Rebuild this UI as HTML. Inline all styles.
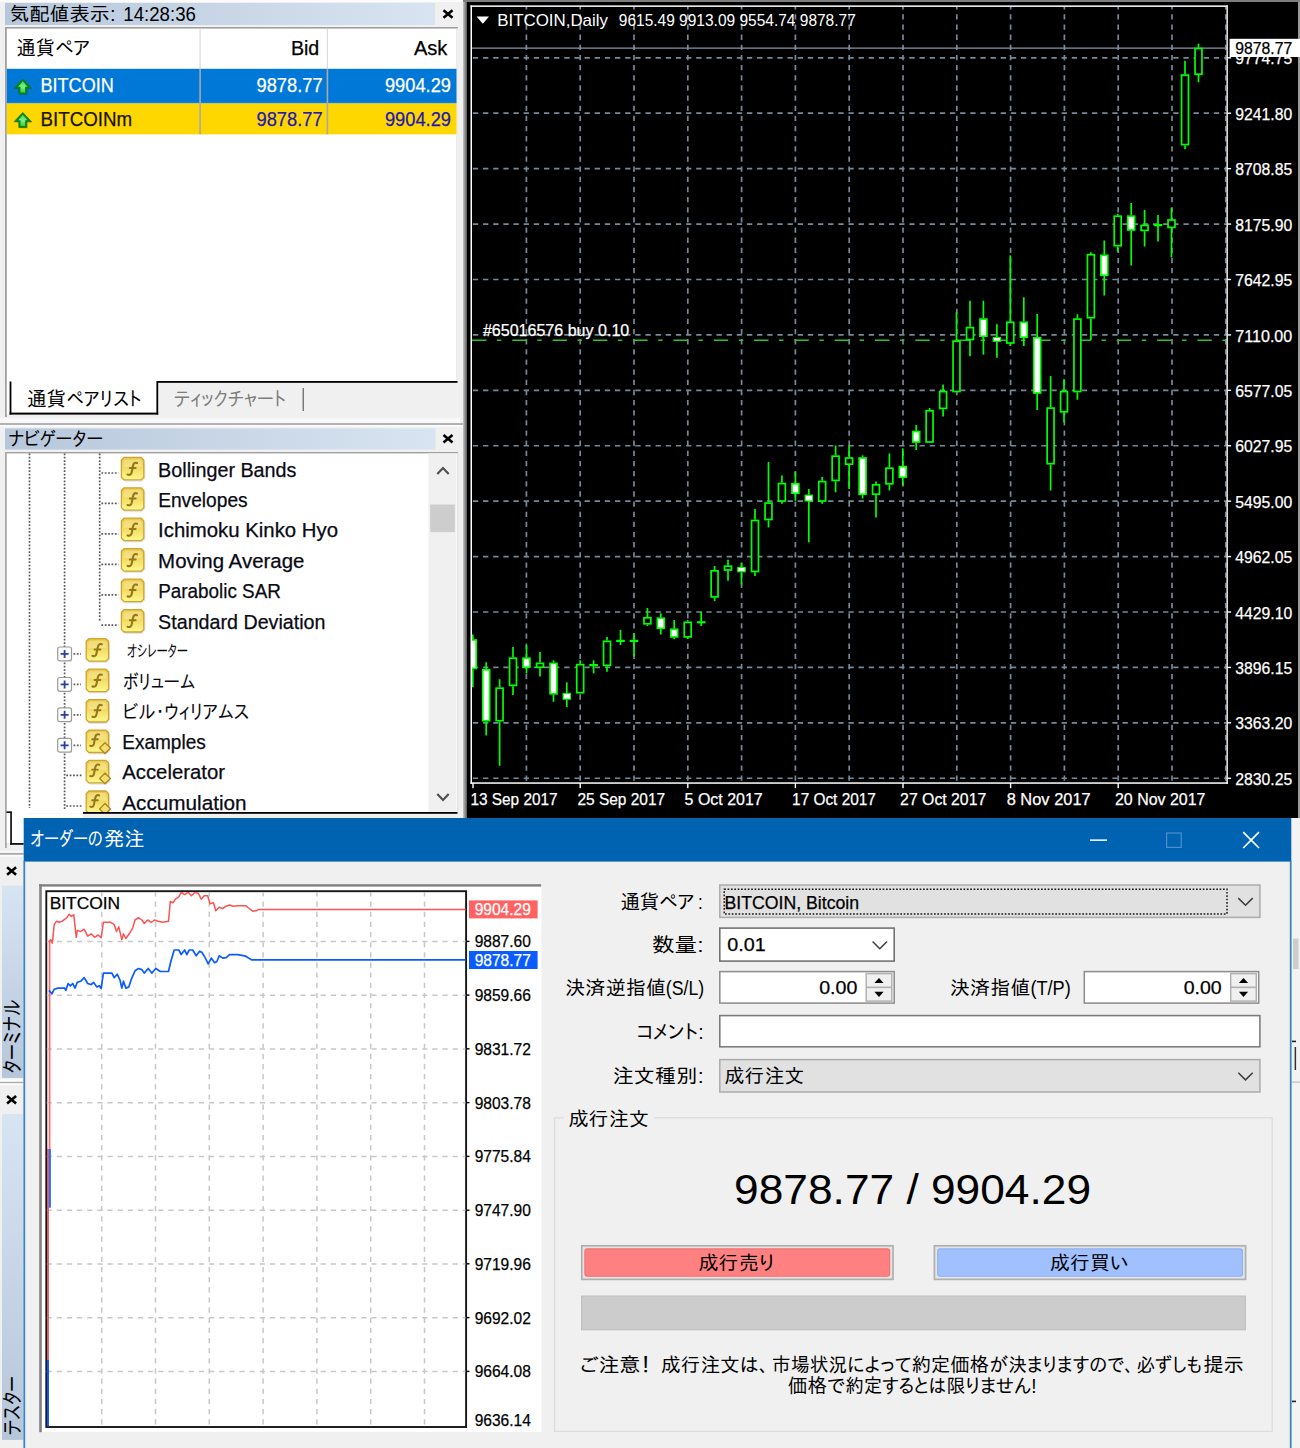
<!DOCTYPE html>
<html lang="ja"><head><meta charset="utf-8"><title>MetaTrader 4 - オーダーの発注</title>
<style>
html,body{margin:0;padding:0;background:#f0f0f0;}
body{width:1300px;height:1448px;overflow:hidden;font-family:"Liberation Sans","IPAPGothic","IPAGothic","Noto Sans CJK JP",sans-serif;}
svg{display:block}
svg text{font-family:"Liberation Sans","IPAPGothic","IPAGothic","Noto Sans CJK JP",sans-serif;white-space:pre}
</style></head><body>
<svg width="1300" height="1448" viewBox="0 0 1300 1448">
<defs>
<linearGradient id="gTitle" x1="0" x2="1" y1="0" y2="0"><stop offset="0" stop-color="#b7c7db"/><stop offset="1" stop-color="#d8e4f1"/></linearGradient>
<linearGradient id="gStrip" x1="0" x2="0" y1="0" y2="1"><stop offset="0" stop-color="#d7e4f2"/><stop offset="1" stop-color="#b6c6da"/></linearGradient>
<linearGradient id="gDiv" x1="0" x2="1" y1="0" y2="0"><stop offset="0" stop-color="#c8c8c8"/><stop offset="1" stop-color="#5a5a5a"/></linearGradient>
<linearGradient id="gIcon" x1="0" x2="0" y1="0" y2="1"><stop offset="0" stop-color="#e9c84e"/><stop offset="0.45" stop-color="#f2da62"/><stop offset="1" stop-color="#fdf98e"/></linearGradient>
<linearGradient id="gArrow" x1="0" x2="0" y1="0" y2="1"><stop offset="0" stop-color="#3fdc4f"/><stop offset="0.5" stop-color="#7af08a"/><stop offset="1" stop-color="#2fd040"/></linearGradient>
<g id="icoF">
 <path d="M4.2 1.6 H21 L24.6 5.2 V21.6 L21 25 H4.2 L1 21.6 V5.2 Z" fill="#8090a8" opacity="0.22"/>
 <path d="M3.2 0.6 H20.4 L23 3.2 V20.4 L20.4 23 H3.2 L0.6 20.4 V3.2 Z" fill="url(#gIcon)" stroke="#cfa42c" stroke-width="1.3" stroke-linejoin="round"/>
 <path d="M4.4 2.6 H19.2 L21 4.6 V10 H2.6 V4.6 Z" fill="#fff6c0" opacity="0.35"/>
 <path d="M16.2 6.2 C13.6 5.2 12.6 7 12.1 9.4 L10.9 15.4 C10.5 17.4 9.4 18.6 6.8 17.8" fill="none" stroke="#94781c" stroke-width="2.1" stroke-linecap="round"/>
 <path d="M9 11.3 H14.8" fill="none" stroke="#94781c" stroke-width="2" stroke-linecap="round"/>
</g>
<g id="icoFd">
 <path d="M4.2 1.6 H21 L24.6 5.2 V21.6 L21 25 H4.2 L1 21.6 V5.2 Z" fill="#8090a8" opacity="0.22"/>
 <path d="M3.2 0.6 H20.4 L23 3.2 V20.4 L20.4 23 H3.2 L0.6 20.4 V3.2 Z" fill="url(#gIcon)" stroke="#cfa42c" stroke-width="1.3" stroke-linejoin="round"/>
 <path d="M4.4 2.6 H19.2 L21 4.6 V10 H2.6 V4.6 Z" fill="#fff6c0" opacity="0.35"/>
 <path d="M13.6 5 C11 4 10 5.8 9.5 8.2 L8.4 14 C8 16 6.9 17 4.6 16.2" fill="none" stroke="#94781c" stroke-width="2" stroke-linecap="round"/>
 <path d="M6.6 9.8 H12.2" fill="none" stroke="#94781c" stroke-width="1.9" stroke-linecap="round"/>
 <path d="M19.4 13.2 L24.8 18.6 L19.4 24 L14 18.6 Z" fill="#f6df72" stroke="#b08a1a" stroke-width="1.4" stroke-linejoin="round"/>
</g>
<g id="icoPlus">
 <rect x="0.6" y="0.6" width="13.8" height="13.8" rx="2" ry="2" fill="#fdfdfd" stroke="#9a9a9a" stroke-width="1.2"/>
 <path d="M3.5 7.5 H11.5 M7.5 3.5 V11.5" stroke="#2a3f9e" stroke-width="1.8" fill="none"/>
</g>
<g id="icoUp">
 <path d="M10 1.4 L19 10.6 H14 V16.4 H6 V10.6 H1 Z" fill="#203040" opacity="0.18"/>
 <path d="M9 0.3 L17.8 9.5 H13 V15.3 H5 V9.5 H0.2 Z" fill="#0e8414" stroke="#0b6e10" stroke-width="0.6" stroke-linejoin="round"/>
 <path d="M9 2.6 L13.6 8 H11.3 V13.8 H6.7 V8 H4.4 Z" fill="url(#gArrow)"/>
</g>
<g id="icoX"><path d="M0 0 L9 7.5 M9 0 L0 7.5" stroke="#000" stroke-width="2.6" fill="none"/></g>
</defs>
<rect x="0.00" y="0.00" width="1300.00" height="1448.00" fill="#f0f0f0" />
<rect x="0.00" y="0.00" width="463.00" height="2.00" fill="#fbfbfb" />
<rect x="5.00" y="3.00" width="430.00" height="22.00" fill="url(#gTitle)" />
<text y="21.05" font-size="19.6" fill="#000" ><tspan x="9.41" textLength="106.18" lengthAdjust="spacingAndGlyphs">気配値表示:</tspan><tspan> </tspan><tspan x="123.31" textLength="72.58" lengthAdjust="spacingAndGlyphs">14:28:36</tspan></text>
<use href="#icoX" x="443.5" y="10.3"/>
<rect x="6.00" y="27.00" width="452.00" height="355.00" fill="#ffffff" />
<rect x="6.00" y="27.00" width="452.00" height="1.60" fill="#a0a0a0" />
<rect x="5.00" y="27.00" width="1.80" height="390.00" fill="#a0a0a0" />
<rect x="456.00" y="28.60" width="2.00" height="353.00" fill="#ececec" />
<rect x="199.50" y="29.00" width="1.20" height="39.50" fill="#dcdcdc" />
<rect x="326.80" y="29.00" width="1.20" height="39.50" fill="#dcdcdc" />
<text y="55.40" font-size="20" fill="#000" ><tspan x="16.60" textLength="38.20" lengthAdjust="spacingAndGlyphs">通貨</tspan><tspan x="55.40" textLength="34.70" lengthAdjust="spacingAndGlyphs">ペア</tspan></text>
<text x="290.92" y="54.62" font-size="19.6" fill="#000" stroke="#000" stroke-width="0.25" textLength="28.36" lengthAdjust="spacingAndGlyphs" >Bid</text>
<text x="413.92" y="54.62" font-size="19.6" fill="#000" stroke="#000" stroke-width="0.25" textLength="33.46" lengthAdjust="spacingAndGlyphs" >Ask</text>
<rect x="6.80" y="68.80" width="449.70" height="34.20" fill="#0078d7" />
<rect x="6.80" y="103.40" width="449.70" height="30.90" fill="#ffd700" />
<rect x="6.80" y="102.80" width="449.70" height="0.80" fill="#8fb090" />
<rect x="6.80" y="134.20" width="449.70" height="0.90" fill="#f5ecb8" />
<rect x="199.30" y="68.80" width="1.60" height="34.20" fill="#a9a9a9" />
<rect x="326.60" y="68.80" width="1.60" height="34.20" fill="#a9a9a9" />
<rect x="199.30" y="103.40" width="1.60" height="30.90" fill="#a9a9a9" />
<rect x="326.60" y="103.40" width="1.60" height="30.90" fill="#a9a9a9" />
<use href="#icoUp" x="13.8" y="78.7"/>
<use href="#icoUp" x="13.8" y="112.2"/>
<text x="40.53" y="92.18" font-size="19.5" fill="#ffffff" stroke="#ffffff" stroke-width="0.25" textLength="73.25" lengthAdjust="spacingAndGlyphs" >BITCOIN</text>
<text x="256.53" y="92.38" font-size="19.5" fill="#ffffff" stroke="#ffffff" stroke-width="0.25" textLength="66.05" lengthAdjust="spacingAndGlyphs" >9878.77</text>
<text x="384.93" y="92.38" font-size="19.5" fill="#ffffff" stroke="#ffffff" stroke-width="0.25" textLength="66.05" lengthAdjust="spacingAndGlyphs" >9904.29</text>
<text x="40.53" y="125.68" font-size="19.5" fill="#1a1200" stroke="#1a1200" stroke-width="0.25" textLength="91.65" lengthAdjust="spacingAndGlyphs" >BITCOINm</text>
<text x="256.53" y="125.88" font-size="19.5" fill="#2418b4" stroke="#2418b4" stroke-width="0.25" textLength="66.05" lengthAdjust="spacingAndGlyphs" >9878.77</text>
<text x="384.93" y="125.88" font-size="19.5" fill="#2418b4" stroke="#2418b4" stroke-width="0.25" textLength="66.05" lengthAdjust="spacingAndGlyphs" >9904.29</text>
<rect x="6.90" y="382.00" width="150.00" height="32.00" fill="#ffffff" />
<rect x="157.00" y="381.00" width="300.50" height="1.80" fill="#000000" />
<rect x="9.60" y="381.50" width="1.80" height="33.00" fill="#000000" />
<rect x="9.60" y="412.60" width="148.60" height="2.00" fill="#000000" />
<rect x="156.40" y="381.00" width="1.80" height="33.60" fill="#000000" />
<text y="406.00" font-size="20" fill="#000" ><tspan x="27.10" textLength="39.00" lengthAdjust="spacingAndGlyphs">通貨</tspan><tspan x="66.80" textLength="75.00" lengthAdjust="spacingAndGlyphs">ペアリスト</tspan></text>
<text x="173.90" y="406.00" font-size="20" fill="#7d7d7d"  textLength="112.30" lengthAdjust="spacingAndGlyphs" >ティックチャート</text>
<rect x="302.60" y="388.00" width="1.30" height="23.00" fill="#6a6a6a" />
<rect x="0.00" y="418.20" width="460.00" height="4.60" fill="#f9f9f9" />
<rect x="0.00" y="423.00" width="463.50" height="2.00" fill="#b2b2b2" />
<rect x="0.00" y="425.20" width="463.00" height="1.50" fill="#fdfdfd" />
<rect x="5.00" y="428.40" width="430.60" height="21.20" fill="url(#gTitle)" />
<text x="8.60" y="446.40" font-size="20" fill="#000"  textLength="94.50" lengthAdjust="spacingAndGlyphs" >ナビゲーター</text>
<use href="#icoX" x="443.5" y="435"/>
<rect x="6.00" y="452.00" width="452.00" height="361.00" fill="#ffffff" />
<rect x="6.00" y="452.00" width="452.00" height="1.40" fill="#a0a0a0" />
<rect x="5.00" y="452.00" width="1.80" height="396.00" fill="#a8a8a8" />
<rect x="457.00" y="453.00" width="1.50" height="359.00" fill="#e4e4e4" />
<rect x="428.40" y="453.40" width="28.00" height="359.00" fill="#f0f0f0" />
<rect x="430.20" y="504.50" width="24.60" height="27.60" fill="#cdcdcd" />
<path d="M437.3 474 L443 468 L448.7 474" fill="none" stroke="#505050" stroke-width="2.2"/>
<path d="M437.3 794 L443 800 L448.7 794" fill="none" stroke="#505050" stroke-width="2.2"/>
<line x1="29.50" y1="453.50" x2="29.50" y2="808.00" stroke="#5a5a5a" stroke-width="1.7" stroke-dasharray="1.75 1.62"/>
<line x1="64.60" y1="453.50" x2="64.60" y2="809.00" stroke="#5a5a5a" stroke-width="1.7" stroke-dasharray="1.75 1.62"/>
<line x1="99.70" y1="453.50" x2="99.70" y2="621.50" stroke="#5a5a5a" stroke-width="1.7" stroke-dasharray="1.75 1.62"/>
<line x1="101.40" y1="473.00" x2="118.50" y2="473.00" stroke="#5a5a5a" stroke-width="1.7" stroke-dasharray="1.75 1.62"/>
<use href="#icoF" x="120.8" y="456.8"/>
<text x="158.14" y="476.61" font-size="19.3" fill="#0a0a14" stroke="#0a0a14" stroke-width="0.25" textLength="138.33" lengthAdjust="spacingAndGlyphs" >Bollinger Bands</text>
<line x1="101.40" y1="503.40" x2="118.50" y2="503.40" stroke="#5a5a5a" stroke-width="1.7" stroke-dasharray="1.75 1.62"/>
<use href="#icoF" x="120.8" y="487.2"/>
<text x="158.14" y="507.01" font-size="19.3" fill="#0a0a14" stroke="#0a0a14" stroke-width="0.25" textLength="89.53" lengthAdjust="spacingAndGlyphs" >Envelopes</text>
<line x1="101.40" y1="533.80" x2="118.50" y2="533.80" stroke="#5a5a5a" stroke-width="1.7" stroke-dasharray="1.75 1.62"/>
<use href="#icoF" x="120.8" y="517.6"/>
<text x="158.14" y="537.41" font-size="19.3" fill="#0a0a14" stroke="#0a0a14" stroke-width="0.25" textLength="179.93" lengthAdjust="spacingAndGlyphs" >Ichimoku Kinko Hyo</text>
<line x1="101.40" y1="564.30" x2="118.50" y2="564.30" stroke="#5a5a5a" stroke-width="1.7" stroke-dasharray="1.75 1.62"/>
<use href="#icoF" x="120.8" y="548.1"/>
<text x="158.14" y="567.91" font-size="19.3" fill="#0a0a14" stroke="#0a0a14" stroke-width="0.25" textLength="146.33" lengthAdjust="spacingAndGlyphs" >Moving Average</text>
<line x1="101.40" y1="594.80" x2="118.50" y2="594.80" stroke="#5a5a5a" stroke-width="1.7" stroke-dasharray="1.75 1.62"/>
<use href="#icoF" x="120.8" y="578.6"/>
<text x="158.14" y="598.41" font-size="19.3" fill="#0a0a14" stroke="#0a0a14" stroke-width="0.25" textLength="122.83" lengthAdjust="spacingAndGlyphs" >Parabolic SAR</text>
<line x1="101.40" y1="625.20" x2="118.50" y2="625.20" stroke="#5a5a5a" stroke-width="1.7" stroke-dasharray="1.75 1.62"/>
<use href="#icoF" x="120.8" y="609.0"/>
<text x="158.14" y="628.81" font-size="19.3" fill="#0a0a14" stroke="#0a0a14" stroke-width="0.25" textLength="167.33" lengthAdjust="spacingAndGlyphs" >Standard Deviation</text>
<clipPath id="cNav"><rect x="6" y="453" width="422" height="359.5"/></clipPath><g clip-path="url(#cNav)">
<use href="#icoPlus" x="57.1" y="646.4"/>
<line x1="73.50" y1="653.90" x2="81.00" y2="653.90" stroke="#5a5a5a" stroke-width="1.7" stroke-dasharray="1.75 1.62"/>
<use href="#icoF" x="85.6" y="638.1"/>
<text x="126.89" y="656.99" font-size="17" fill="#0a0a14"  textLength="61.02" lengthAdjust="spacingAndGlyphs" >オシレーター</text>
<use href="#icoPlus" x="57.1" y="676.9"/>
<line x1="73.50" y1="684.40" x2="81.00" y2="684.40" stroke="#5a5a5a" stroke-width="1.7" stroke-dasharray="1.75 1.62"/>
<use href="#icoF" x="85.6" y="668.6"/>
<text x="122.70" y="688.60" font-size="20" fill="#0a0a14"  textLength="72.40" lengthAdjust="spacingAndGlyphs" >ボリューム</text>
<use href="#icoPlus" x="57.1" y="707.3"/>
<line x1="73.50" y1="714.80" x2="81.00" y2="714.80" stroke="#5a5a5a" stroke-width="1.7" stroke-dasharray="1.75 1.62"/>
<use href="#icoF" x="85.6" y="699.0"/>
<text x="122.70" y="719.00" font-size="20" fill="#0a0a14"  textLength="126.60" lengthAdjust="spacingAndGlyphs" >ビル・ウィリアムス</text>
<use href="#icoPlus" x="57.1" y="737.8"/>
<line x1="73.50" y1="745.30" x2="81.00" y2="745.30" stroke="#5a5a5a" stroke-width="1.7" stroke-dasharray="1.75 1.62"/>
<use href="#icoFd" x="85.6" y="729.5"/>
<text x="122.24" y="749.01" font-size="19.3" fill="#0a0a14" stroke="#0a0a14" stroke-width="0.25" textLength="83.53" lengthAdjust="spacingAndGlyphs" >Examples</text>
<line x1="66.30" y1="775.40" x2="83.00" y2="775.40" stroke="#5a5a5a" stroke-width="1.7" stroke-dasharray="1.75 1.62"/>
<use href="#icoFd" x="85.6" y="759.8"/>
<text x="122.24" y="779.31" font-size="19.3" fill="#0a0a14" stroke="#0a0a14" stroke-width="0.25" textLength="102.73" lengthAdjust="spacingAndGlyphs" >Accelerator</text>
<line x1="66.30" y1="806.00" x2="83.00" y2="806.00" stroke="#5a5a5a" stroke-width="1.7" stroke-dasharray="1.75 1.62"/>
<use href="#icoFd" x="85.6" y="790.4"/>
<text x="122.24" y="809.91" font-size="19.3" fill="#0a0a14" stroke="#0a0a14" stroke-width="0.25" textLength="124.33" lengthAdjust="spacingAndGlyphs" >Accumulation</text>
</g>
<rect x="6.80" y="813.00" width="20.00" height="30.00" fill="#ffffff" />
<rect x="11.00" y="813.50" width="72.00" height="5.00" fill="#ffffff" />
<rect x="83.00" y="812.00" width="374.50" height="1.80" fill="#000000" />
<rect x="10.20" y="812.00" width="1.70" height="32.80" fill="#111111" />
<rect x="6.50" y="811.30" width="5.40" height="1.70" fill="#111111" />
<rect x="10.20" y="843.00" width="14.00" height="1.80" fill="#111111" />
<rect x="0.00" y="851.20" width="24.00" height="1.50" fill="#fdfdfd" />
<rect x="0.00" y="852.90" width="24.00" height="1.90" fill="#adadad" />
<rect x="0.00" y="855.00" width="24.00" height="1.60" fill="#fdfdfd" />
<use href="#icoX" x="7.1" y="867.3"/>
<rect x="2.00" y="885.50" width="21.40" height="192.40" fill="url(#gStrip)" />
<text transform="translate(20.4,1073.5) rotate(-90)" font-size="22" textLength="74" lengthAdjust="spacingAndGlyphs" fill="#000">ターミナル</text>
<rect x="0.00" y="1079.30" width="24.00" height="2.30" fill="#fdfdfd" />
<rect x="0.00" y="1081.80" width="24.00" height="1.50" fill="#adadad" />
<rect x="0.00" y="1083.50" width="24.00" height="1.60" fill="#fdfdfd" />
<use href="#icoX" x="7.1" y="1095.9"/>
<rect x="2.00" y="1113.90" width="21.40" height="326.00" fill="url(#gStrip)" />
<text transform="translate(20.4,1435) rotate(-90)" font-size="22" textLength="59" lengthAdjust="spacingAndGlyphs" fill="#000">テスター</text>
<rect x="463.00" y="0.00" width="4.00" height="818.00" fill="url(#gDiv)" />
<rect x="467.00" y="0.00" width="833.00" height="818.00" fill="#000000" />
<rect x="463.00" y="0.00" width="837.00" height="2.00" fill="#7e7e7e" />
<rect x="1298.00" y="2.00" width="2.00" height="816.00" fill="#9a9a9a" />
<clipPath id="cChart"><rect x="471.8" y="6.8" width="755" height="776"/></clipPath>
<g clip-path="url(#cChart)">
<line x1="526.40" y1="4.15" x2="526.40" y2="783.00" stroke="#778899" stroke-width="1.7" stroke-dasharray="5.3 4.85"/>
<line x1="580.20" y1="4.15" x2="580.20" y2="783.00" stroke="#778899" stroke-width="1.7" stroke-dasharray="5.3 4.85"/>
<line x1="634.00" y1="4.15" x2="634.00" y2="783.00" stroke="#778899" stroke-width="1.7" stroke-dasharray="5.3 4.85"/>
<line x1="687.80" y1="4.15" x2="687.80" y2="783.00" stroke="#778899" stroke-width="1.7" stroke-dasharray="5.3 4.85"/>
<line x1="741.60" y1="4.15" x2="741.60" y2="783.00" stroke="#778899" stroke-width="1.7" stroke-dasharray="5.3 4.85"/>
<line x1="795.40" y1="4.15" x2="795.40" y2="783.00" stroke="#778899" stroke-width="1.7" stroke-dasharray="5.3 4.85"/>
<line x1="849.20" y1="4.15" x2="849.20" y2="783.00" stroke="#778899" stroke-width="1.7" stroke-dasharray="5.3 4.85"/>
<line x1="903.00" y1="4.15" x2="903.00" y2="783.00" stroke="#778899" stroke-width="1.7" stroke-dasharray="5.3 4.85"/>
<line x1="956.80" y1="4.15" x2="956.80" y2="783.00" stroke="#778899" stroke-width="1.7" stroke-dasharray="5.3 4.85"/>
<line x1="1010.60" y1="4.15" x2="1010.60" y2="783.00" stroke="#778899" stroke-width="1.7" stroke-dasharray="5.3 4.85"/>
<line x1="1064.40" y1="4.15" x2="1064.40" y2="783.00" stroke="#778899" stroke-width="1.7" stroke-dasharray="5.3 4.85"/>
<line x1="1118.20" y1="4.15" x2="1118.20" y2="783.00" stroke="#778899" stroke-width="1.7" stroke-dasharray="5.3 4.85"/>
<line x1="1172.00" y1="4.15" x2="1172.00" y2="783.00" stroke="#778899" stroke-width="1.7" stroke-dasharray="5.3 4.85"/>
<line x1="1225.80" y1="4.15" x2="1225.80" y2="783.00" stroke="#778899" stroke-width="1.7" stroke-dasharray="5.3 4.85"/>
<line x1="472.90" y1="57.80" x2="1227.00" y2="57.80" stroke="#778899" stroke-width="1.7" stroke-dasharray="5.3 4.85"/>
<line x1="472.90" y1="113.22" x2="1227.00" y2="113.22" stroke="#778899" stroke-width="1.7" stroke-dasharray="5.3 4.85"/>
<line x1="472.90" y1="168.64" x2="1227.00" y2="168.64" stroke="#778899" stroke-width="1.7" stroke-dasharray="5.3 4.85"/>
<line x1="472.90" y1="224.06" x2="1227.00" y2="224.06" stroke="#778899" stroke-width="1.7" stroke-dasharray="5.3 4.85"/>
<line x1="472.90" y1="279.48" x2="1227.00" y2="279.48" stroke="#778899" stroke-width="1.7" stroke-dasharray="5.3 4.85"/>
<line x1="472.90" y1="334.90" x2="1227.00" y2="334.90" stroke="#778899" stroke-width="1.7" stroke-dasharray="5.3 4.85"/>
<line x1="472.90" y1="390.32" x2="1227.00" y2="390.32" stroke="#778899" stroke-width="1.7" stroke-dasharray="5.3 4.85"/>
<line x1="472.90" y1="445.74" x2="1227.00" y2="445.74" stroke="#778899" stroke-width="1.7" stroke-dasharray="5.3 4.85"/>
<line x1="472.90" y1="501.16" x2="1227.00" y2="501.16" stroke="#778899" stroke-width="1.7" stroke-dasharray="5.3 4.85"/>
<line x1="472.90" y1="556.58" x2="1227.00" y2="556.58" stroke="#778899" stroke-width="1.7" stroke-dasharray="5.3 4.85"/>
<line x1="472.90" y1="612.00" x2="1227.00" y2="612.00" stroke="#778899" stroke-width="1.7" stroke-dasharray="5.3 4.85"/>
<line x1="472.90" y1="667.42" x2="1227.00" y2="667.42" stroke="#778899" stroke-width="1.7" stroke-dasharray="5.3 4.85"/>
<line x1="472.90" y1="722.84" x2="1227.00" y2="722.84" stroke="#778899" stroke-width="1.7" stroke-dasharray="5.3 4.85"/>
<line x1="472.90" y1="778.26" x2="1227.00" y2="778.26" stroke="#778899" stroke-width="1.7" stroke-dasharray="5.3 4.85"/>
<line x1="472.00" y1="48.10" x2="1227.00" y2="48.10" stroke="#8495a7" stroke-width="1.35" />
<line x1="472.00" y1="340.30" x2="1227.00" y2="340.30" stroke="#2fc22f" stroke-width="1.5" stroke-dasharray="14.4 10.6 4.4 10.9"/>
<line x1="472.80" y1="634.60" x2="472.80" y2="639.20" stroke="#00ff00" stroke-width="1.7" />
<line x1="472.80" y1="669.20" x2="472.80" y2="687.00" stroke="#00ff00" stroke-width="1.7" />
<rect x="469.35" y="640.00" width="6.9" height="28.40" fill="#ffffff" stroke="#00ff00" stroke-width="1.7"/>
<line x1="486.20" y1="662.30" x2="486.20" y2="669.00" stroke="#00ff00" stroke-width="1.7" />
<line x1="486.20" y1="721.50" x2="486.20" y2="735.40" stroke="#00ff00" stroke-width="1.7" />
<rect x="482.75" y="669.80" width="6.9" height="50.90" fill="#ffffff" stroke="#00ff00" stroke-width="1.7"/>
<line x1="499.60" y1="679.20" x2="499.60" y2="687.40" stroke="#00ff00" stroke-width="1.7" />
<line x1="499.60" y1="721.50" x2="499.60" y2="765.80" stroke="#00ff00" stroke-width="1.7" />
<rect x="496.15" y="688.20" width="6.9" height="32.50" fill="#000000" stroke="#00ff00" stroke-width="1.7"/>
<line x1="513.00" y1="647.00" x2="513.00" y2="657.40" stroke="#00ff00" stroke-width="1.7" />
<line x1="513.00" y1="686.20" x2="513.00" y2="695.00" stroke="#00ff00" stroke-width="1.7" />
<rect x="509.55" y="658.20" width="6.9" height="27.20" fill="#000000" stroke="#00ff00" stroke-width="1.7"/>
<line x1="526.50" y1="645.40" x2="526.50" y2="657.40" stroke="#00ff00" stroke-width="1.7" />
<line x1="526.50" y1="668.00" x2="526.50" y2="673.50" stroke="#00ff00" stroke-width="1.7" />
<rect x="523.05" y="658.20" width="6.9" height="9.00" fill="#ffffff" stroke="#00ff00" stroke-width="1.7"/>
<line x1="540.00" y1="652.00" x2="540.00" y2="662.60" stroke="#00ff00" stroke-width="1.7" />
<line x1="540.00" y1="668.00" x2="540.00" y2="676.60" stroke="#00ff00" stroke-width="1.7" />
<rect x="536.55" y="663.40" width="6.9" height="3.80" fill="#000000" stroke="#00ff00" stroke-width="1.7"/>
<line x1="553.50" y1="660.30" x2="553.50" y2="662.60" stroke="#00ff00" stroke-width="1.7" />
<line x1="553.50" y1="694.60" x2="553.50" y2="701.80" stroke="#00ff00" stroke-width="1.7" />
<rect x="550.05" y="663.40" width="6.9" height="30.40" fill="#ffffff" stroke="#00ff00" stroke-width="1.7"/>
<line x1="566.80" y1="682.30" x2="566.80" y2="693.00" stroke="#00ff00" stroke-width="1.7" />
<line x1="566.80" y1="699.70" x2="566.80" y2="707.00" stroke="#00ff00" stroke-width="1.7" />
<rect x="563.10" y="693.55" width="7.4" height="5.60" fill="#ffffff" stroke="#00ff00" stroke-width="1.15"/>
<line x1="580.20" y1="660.30" x2="580.20" y2="663.80" stroke="#00ff00" stroke-width="1.7" />
<line x1="580.20" y1="693.50" x2="580.20" y2="693.50" stroke="#00ff00" stroke-width="1.7" />
<rect x="576.75" y="664.60" width="6.9" height="28.10" fill="#000000" stroke="#00ff00" stroke-width="1.7"/>
<line x1="593.60" y1="660.30" x2="593.60" y2="664.20" stroke="#00ff00" stroke-width="1.7" />
<line x1="593.60" y1="666.00" x2="593.60" y2="673.40" stroke="#00ff00" stroke-width="1.7" />
<rect x="589.30" y="664.00" width="8.60" height="2.20" fill="#00ff00" />
<line x1="607.00" y1="637.00" x2="607.00" y2="640.50" stroke="#00ff00" stroke-width="1.7" />
<line x1="607.00" y1="666.20" x2="607.00" y2="671.80" stroke="#00ff00" stroke-width="1.7" />
<rect x="603.55" y="641.30" width="6.9" height="24.10" fill="#000000" stroke="#00ff00" stroke-width="1.7"/>
<line x1="620.50" y1="630.00" x2="620.50" y2="640.20" stroke="#00ff00" stroke-width="1.7" />
<line x1="620.50" y1="641.60" x2="620.50" y2="645.00" stroke="#00ff00" stroke-width="1.7" />
<rect x="616.20" y="639.80" width="8.60" height="2.20" fill="#00ff00" />
<line x1="634.00" y1="633.00" x2="634.00" y2="640.20" stroke="#00ff00" stroke-width="1.7" />
<line x1="634.00" y1="641.60" x2="634.00" y2="656.50" stroke="#00ff00" stroke-width="1.7" />
<rect x="629.70" y="639.80" width="8.60" height="2.20" fill="#00ff00" />
<line x1="647.40" y1="608.00" x2="647.40" y2="617.00" stroke="#00ff00" stroke-width="1.7" />
<line x1="647.40" y1="624.60" x2="647.40" y2="626.00" stroke="#00ff00" stroke-width="1.7" />
<rect x="643.95" y="617.80" width="6.9" height="6.00" fill="#000000" stroke="#00ff00" stroke-width="1.7"/>
<line x1="660.80" y1="613.30" x2="660.80" y2="617.40" stroke="#00ff00" stroke-width="1.7" />
<line x1="660.80" y1="629.10" x2="660.80" y2="634.60" stroke="#00ff00" stroke-width="1.7" />
<rect x="657.35" y="618.20" width="6.9" height="10.10" fill="#ffffff" stroke="#00ff00" stroke-width="1.7"/>
<line x1="674.20" y1="620.00" x2="674.20" y2="628.50" stroke="#00ff00" stroke-width="1.7" />
<line x1="674.20" y1="637.70" x2="674.20" y2="639.20" stroke="#00ff00" stroke-width="1.7" />
<rect x="670.75" y="629.30" width="6.9" height="7.60" fill="#ffffff" stroke="#00ff00" stroke-width="1.7"/>
<line x1="687.70" y1="620.00" x2="687.70" y2="621.50" stroke="#00ff00" stroke-width="1.7" />
<line x1="687.70" y1="637.70" x2="687.70" y2="639.00" stroke="#00ff00" stroke-width="1.7" />
<rect x="684.25" y="622.30" width="6.9" height="14.60" fill="#000000" stroke="#00ff00" stroke-width="1.7"/>
<line x1="701.20" y1="611.50" x2="701.20" y2="621.60" stroke="#00ff00" stroke-width="1.7" />
<line x1="701.20" y1="623.00" x2="701.20" y2="626.00" stroke="#00ff00" stroke-width="1.7" />
<rect x="696.90" y="621.20" width="8.60" height="2.20" fill="#00ff00" />
<line x1="714.60" y1="566.00" x2="714.60" y2="570.00" stroke="#00ff00" stroke-width="1.7" />
<line x1="714.60" y1="597.70" x2="714.60" y2="601.00" stroke="#00ff00" stroke-width="1.7" />
<rect x="711.15" y="570.80" width="6.9" height="26.10" fill="#000000" stroke="#00ff00" stroke-width="1.7"/>
<line x1="728.00" y1="559.70" x2="728.00" y2="565.40" stroke="#00ff00" stroke-width="1.7" />
<line x1="728.00" y1="570.80" x2="728.00" y2="580.80" stroke="#00ff00" stroke-width="1.7" />
<rect x="724.55" y="566.20" width="6.9" height="3.80" fill="#000000" stroke="#00ff00" stroke-width="1.7"/>
<line x1="741.50" y1="563.00" x2="741.50" y2="567.00" stroke="#00ff00" stroke-width="1.7" />
<line x1="741.50" y1="572.30" x2="741.50" y2="584.30" stroke="#00ff00" stroke-width="1.7" />
<rect x="737.80" y="567.55" width="7.4" height="4.20" fill="#ffffff" stroke="#00ff00" stroke-width="1.15"/>
<line x1="755.00" y1="509.00" x2="755.00" y2="519.70" stroke="#00ff00" stroke-width="1.7" />
<line x1="755.00" y1="572.30" x2="755.00" y2="576.00" stroke="#00ff00" stroke-width="1.7" />
<rect x="751.55" y="520.50" width="6.9" height="51.00" fill="#000000" stroke="#00ff00" stroke-width="1.7"/>
<line x1="768.50" y1="462.00" x2="768.50" y2="502.30" stroke="#00ff00" stroke-width="1.7" />
<line x1="768.50" y1="520.30" x2="768.50" y2="527.40" stroke="#00ff00" stroke-width="1.7" />
<rect x="765.05" y="503.10" width="6.9" height="16.40" fill="#000000" stroke="#00ff00" stroke-width="1.7"/>
<line x1="781.90" y1="475.40" x2="781.90" y2="482.80" stroke="#00ff00" stroke-width="1.7" />
<line x1="781.90" y1="501.80" x2="781.90" y2="503.80" stroke="#00ff00" stroke-width="1.7" />
<rect x="778.45" y="483.60" width="6.9" height="17.40" fill="#000000" stroke="#00ff00" stroke-width="1.7"/>
<line x1="795.40" y1="472.00" x2="795.40" y2="483.00" stroke="#00ff00" stroke-width="1.7" />
<line x1="795.40" y1="494.00" x2="795.40" y2="500.80" stroke="#00ff00" stroke-width="1.7" />
<rect x="791.95" y="483.80" width="6.9" height="9.40" fill="#ffffff" stroke="#00ff00" stroke-width="1.7"/>
<line x1="808.80" y1="489.00" x2="808.80" y2="494.60" stroke="#00ff00" stroke-width="1.7" />
<line x1="808.80" y1="501.50" x2="808.80" y2="542.30" stroke="#00ff00" stroke-width="1.7" />
<rect x="805.10" y="495.15" width="7.4" height="5.80" fill="#ffffff" stroke="#00ff00" stroke-width="1.15"/>
<line x1="822.20" y1="477.00" x2="822.20" y2="480.80" stroke="#00ff00" stroke-width="1.7" />
<line x1="822.20" y1="501.80" x2="822.20" y2="503.80" stroke="#00ff00" stroke-width="1.7" />
<rect x="818.75" y="481.60" width="6.9" height="19.40" fill="#000000" stroke="#00ff00" stroke-width="1.7"/>
<line x1="835.60" y1="445.40" x2="835.60" y2="455.40" stroke="#00ff00" stroke-width="1.7" />
<line x1="835.60" y1="481.20" x2="835.60" y2="492.30" stroke="#00ff00" stroke-width="1.7" />
<rect x="832.15" y="456.20" width="6.9" height="24.20" fill="#000000" stroke="#00ff00" stroke-width="1.7"/>
<line x1="849.10" y1="445.40" x2="849.10" y2="457.20" stroke="#00ff00" stroke-width="1.7" />
<line x1="849.10" y1="465.00" x2="849.10" y2="489.00" stroke="#00ff00" stroke-width="1.7" />
<rect x="845.65" y="458.00" width="6.9" height="6.20" fill="#000000" stroke="#00ff00" stroke-width="1.7"/>
<line x1="862.60" y1="455.40" x2="862.60" y2="457.20" stroke="#00ff00" stroke-width="1.7" />
<line x1="862.60" y1="495.00" x2="862.60" y2="498.50" stroke="#00ff00" stroke-width="1.7" />
<rect x="859.15" y="458.00" width="6.9" height="36.20" fill="#ffffff" stroke="#00ff00" stroke-width="1.7"/>
<line x1="876.00" y1="481.50" x2="876.00" y2="484.00" stroke="#00ff00" stroke-width="1.7" />
<line x1="876.00" y1="495.00" x2="876.00" y2="517.50" stroke="#00ff00" stroke-width="1.7" />
<rect x="872.55" y="484.80" width="6.9" height="9.40" fill="#000000" stroke="#00ff00" stroke-width="1.7"/>
<line x1="889.40" y1="453.40" x2="889.40" y2="467.40" stroke="#00ff00" stroke-width="1.7" />
<line x1="889.40" y1="484.60" x2="889.40" y2="490.50" stroke="#00ff00" stroke-width="1.7" />
<rect x="885.95" y="468.20" width="6.9" height="15.60" fill="#000000" stroke="#00ff00" stroke-width="1.7"/>
<line x1="902.80" y1="448.50" x2="902.80" y2="465.80" stroke="#00ff00" stroke-width="1.7" />
<line x1="902.80" y1="478.00" x2="902.80" y2="485.40" stroke="#00ff00" stroke-width="1.7" />
<rect x="899.35" y="466.60" width="6.9" height="10.60" fill="#ffffff" stroke="#00ff00" stroke-width="1.7"/>
<line x1="916.20" y1="425.00" x2="916.20" y2="430.80" stroke="#00ff00" stroke-width="1.7" />
<line x1="916.20" y1="442.80" x2="916.20" y2="450.00" stroke="#00ff00" stroke-width="1.7" />
<rect x="912.75" y="431.60" width="6.9" height="10.40" fill="#ffffff" stroke="#00ff00" stroke-width="1.7"/>
<line x1="929.60" y1="408.00" x2="929.60" y2="410.00" stroke="#00ff00" stroke-width="1.7" />
<line x1="929.60" y1="442.80" x2="929.60" y2="442.80" stroke="#00ff00" stroke-width="1.7" />
<rect x="926.15" y="410.80" width="6.9" height="31.20" fill="#000000" stroke="#00ff00" stroke-width="1.7"/>
<line x1="943.10" y1="384.60" x2="943.10" y2="390.80" stroke="#00ff00" stroke-width="1.7" />
<line x1="943.10" y1="409.20" x2="943.10" y2="416.50" stroke="#00ff00" stroke-width="1.7" />
<rect x="939.65" y="391.60" width="6.9" height="16.80" fill="#000000" stroke="#00ff00" stroke-width="1.7"/>
<line x1="956.50" y1="312.30" x2="956.50" y2="340.30" stroke="#00ff00" stroke-width="1.7" />
<line x1="956.50" y1="392.30" x2="956.50" y2="392.30" stroke="#00ff00" stroke-width="1.7" />
<rect x="953.05" y="341.10" width="6.9" height="50.40" fill="#000000" stroke="#00ff00" stroke-width="1.7"/>
<line x1="970.00" y1="300.80" x2="970.00" y2="326.80" stroke="#00ff00" stroke-width="1.7" />
<line x1="970.00" y1="340.30" x2="970.00" y2="356.20" stroke="#00ff00" stroke-width="1.7" />
<rect x="966.55" y="327.60" width="6.9" height="11.90" fill="#000000" stroke="#00ff00" stroke-width="1.7"/>
<line x1="983.40" y1="300.80" x2="983.40" y2="318.30" stroke="#00ff00" stroke-width="1.7" />
<line x1="983.40" y1="337.00" x2="983.40" y2="354.60" stroke="#00ff00" stroke-width="1.7" />
<rect x="979.95" y="319.10" width="6.9" height="17.10" fill="#ffffff" stroke="#00ff00" stroke-width="1.7"/>
<line x1="996.90" y1="324.30" x2="996.90" y2="337.00" stroke="#00ff00" stroke-width="1.7" />
<line x1="996.90" y1="341.80" x2="996.90" y2="357.70" stroke="#00ff00" stroke-width="1.7" />
<rect x="993.20" y="337.55" width="7.4" height="3.70" fill="#ffffff" stroke="#00ff00" stroke-width="1.15"/>
<line x1="1010.30" y1="255.40" x2="1010.30" y2="321.50" stroke="#00ff00" stroke-width="1.7" />
<line x1="1010.30" y1="343.80" x2="1010.30" y2="346.00" stroke="#00ff00" stroke-width="1.7" />
<rect x="1006.85" y="322.30" width="6.9" height="20.70" fill="#000000" stroke="#00ff00" stroke-width="1.7"/>
<line x1="1023.80" y1="297.20" x2="1023.80" y2="321.50" stroke="#00ff00" stroke-width="1.7" />
<line x1="1023.80" y1="338.00" x2="1023.80" y2="346.00" stroke="#00ff00" stroke-width="1.7" />
<rect x="1020.35" y="322.30" width="6.9" height="14.90" fill="#ffffff" stroke="#00ff00" stroke-width="1.7"/>
<line x1="1037.20" y1="314.00" x2="1037.20" y2="337.00" stroke="#00ff00" stroke-width="1.7" />
<line x1="1037.20" y1="393.80" x2="1037.20" y2="410.00" stroke="#00ff00" stroke-width="1.7" />
<rect x="1033.75" y="337.80" width="6.9" height="55.20" fill="#ffffff" stroke="#00ff00" stroke-width="1.7"/>
<line x1="1050.60" y1="376.00" x2="1050.60" y2="407.30" stroke="#00ff00" stroke-width="1.7" />
<line x1="1050.60" y1="464.50" x2="1050.60" y2="490.40" stroke="#00ff00" stroke-width="1.7" />
<rect x="1047.15" y="408.10" width="6.9" height="55.60" fill="#000000" stroke="#00ff00" stroke-width="1.7"/>
<line x1="1064.00" y1="379.20" x2="1064.00" y2="390.80" stroke="#00ff00" stroke-width="1.7" />
<line x1="1064.00" y1="412.60" x2="1064.00" y2="422.30" stroke="#00ff00" stroke-width="1.7" />
<rect x="1060.55" y="391.60" width="6.9" height="20.20" fill="#000000" stroke="#00ff00" stroke-width="1.7"/>
<line x1="1077.40" y1="314.20" x2="1077.40" y2="318.30" stroke="#00ff00" stroke-width="1.7" />
<line x1="1077.40" y1="392.30" x2="1077.40" y2="399.70" stroke="#00ff00" stroke-width="1.7" />
<rect x="1073.95" y="319.10" width="6.9" height="72.40" fill="#000000" stroke="#00ff00" stroke-width="1.7"/>
<line x1="1090.90" y1="252.20" x2="1090.90" y2="253.90" stroke="#00ff00" stroke-width="1.7" />
<line x1="1090.90" y1="318.50" x2="1090.90" y2="340.30" stroke="#00ff00" stroke-width="1.7" />
<rect x="1087.45" y="254.70" width="6.9" height="63.00" fill="#000000" stroke="#00ff00" stroke-width="1.7"/>
<line x1="1104.30" y1="240.40" x2="1104.30" y2="254.50" stroke="#00ff00" stroke-width="1.7" />
<line x1="1104.30" y1="276.10" x2="1104.30" y2="295.60" stroke="#00ff00" stroke-width="1.7" />
<rect x="1100.85" y="255.30" width="6.9" height="20.00" fill="#ffffff" stroke="#00ff00" stroke-width="1.7"/>
<line x1="1117.70" y1="213.80" x2="1117.70" y2="215.40" stroke="#00ff00" stroke-width="1.7" />
<line x1="1117.70" y1="246.50" x2="1117.70" y2="251.50" stroke="#00ff00" stroke-width="1.7" />
<rect x="1114.25" y="216.20" width="6.9" height="29.50" fill="#000000" stroke="#00ff00" stroke-width="1.7"/>
<line x1="1131.20" y1="203.00" x2="1131.20" y2="215.40" stroke="#00ff00" stroke-width="1.7" />
<line x1="1131.20" y1="230.80" x2="1131.20" y2="265.40" stroke="#00ff00" stroke-width="1.7" />
<rect x="1127.75" y="216.20" width="6.9" height="13.80" fill="#ffffff" stroke="#00ff00" stroke-width="1.7"/>
<line x1="1144.60" y1="210.00" x2="1144.60" y2="224.60" stroke="#00ff00" stroke-width="1.7" />
<line x1="1144.60" y1="231.20" x2="1144.60" y2="246.60" stroke="#00ff00" stroke-width="1.7" />
<rect x="1141.15" y="225.40" width="6.9" height="5.00" fill="#000000" stroke="#00ff00" stroke-width="1.7"/>
<line x1="1158.00" y1="215.00" x2="1158.00" y2="224.40" stroke="#00ff00" stroke-width="1.7" />
<line x1="1158.00" y1="225.80" x2="1158.00" y2="241.50" stroke="#00ff00" stroke-width="1.7" />
<rect x="1153.70" y="224.00" width="8.60" height="2.20" fill="#00ff00" />
<line x1="1171.50" y1="207.70" x2="1171.50" y2="219.20" stroke="#00ff00" stroke-width="1.7" />
<line x1="1171.50" y1="228.20" x2="1171.50" y2="257.40" stroke="#00ff00" stroke-width="1.7" />
<rect x="1168.05" y="220.00" width="6.9" height="7.40" fill="#000000" stroke="#00ff00" stroke-width="1.7"/>
<line x1="1185.00" y1="60.80" x2="1185.00" y2="74.30" stroke="#00ff00" stroke-width="1.7" />
<line x1="1185.00" y1="145.40" x2="1185.00" y2="149.20" stroke="#00ff00" stroke-width="1.7" />
<rect x="1181.55" y="75.10" width="6.9" height="69.50" fill="#000000" stroke="#00ff00" stroke-width="1.7"/>
<line x1="1198.50" y1="43.80" x2="1198.50" y2="47.70" stroke="#00ff00" stroke-width="1.7" />
<line x1="1198.50" y1="75.00" x2="1198.50" y2="82.30" stroke="#00ff00" stroke-width="1.7" />
<rect x="1195.05" y="48.50" width="6.9" height="25.70" fill="#000000" stroke="#00ff00" stroke-width="1.7"/>
</g>
<rect x="470.50" y="5.40" width="757.20" height="1.50" fill="#ffffff" />
<rect x="470.50" y="5.40" width="1.50" height="778.40" fill="#ffffff" />
<rect x="1226.40" y="5.40" width="1.50" height="778.40" fill="#f0f0f0" />
<rect x="470.50" y="782.30" width="757.40" height="1.50" fill="#ffffff" />
<rect x="472.30" y="783.00" width="1.40" height="5.20" fill="#ffffff" />
<rect x="579.50" y="783.00" width="1.40" height="5.20" fill="#ffffff" />
<rect x="687.10" y="783.00" width="1.40" height="5.20" fill="#ffffff" />
<rect x="794.70" y="783.00" width="1.40" height="5.20" fill="#ffffff" />
<rect x="902.30" y="783.00" width="1.40" height="5.20" fill="#ffffff" />
<rect x="1009.90" y="783.00" width="1.40" height="5.20" fill="#ffffff" />
<rect x="1117.50" y="783.00" width="1.40" height="5.20" fill="#ffffff" />
<rect x="1227.50" y="57.10" width="3.60" height="1.40" fill="#ffffff" />
<text x="1235.28" y="64.41" font-size="16.8" fill="#ffffff" stroke="#ffffff" stroke-width="0.25" textLength="57.00" lengthAdjust="spacingAndGlyphs" >9774.75</text>
<rect x="1227.50" y="112.52" width="3.60" height="1.40" fill="#ffffff" />
<text x="1235.28" y="119.83" font-size="16.8" fill="#ffffff" stroke="#ffffff" stroke-width="0.25" textLength="57.00" lengthAdjust="spacingAndGlyphs" >9241.80</text>
<rect x="1227.50" y="167.94" width="3.60" height="1.40" fill="#ffffff" />
<text x="1235.28" y="175.25" font-size="16.8" fill="#ffffff" stroke="#ffffff" stroke-width="0.25" textLength="57.00" lengthAdjust="spacingAndGlyphs" >8708.85</text>
<rect x="1227.50" y="223.36" width="3.60" height="1.40" fill="#ffffff" />
<text x="1235.28" y="230.67" font-size="16.8" fill="#ffffff" stroke="#ffffff" stroke-width="0.25" textLength="57.00" lengthAdjust="spacingAndGlyphs" >8175.90</text>
<rect x="1227.50" y="278.78" width="3.60" height="1.40" fill="#ffffff" />
<text x="1235.28" y="286.09" font-size="16.8" fill="#ffffff" stroke="#ffffff" stroke-width="0.25" textLength="57.00" lengthAdjust="spacingAndGlyphs" >7642.95</text>
<rect x="1227.50" y="334.20" width="3.60" height="1.40" fill="#ffffff" />
<text x="1235.28" y="341.51" font-size="16.8" fill="#ffffff" stroke="#ffffff" stroke-width="0.25" textLength="57.00" lengthAdjust="spacingAndGlyphs" >7110.00</text>
<rect x="1227.50" y="389.62" width="3.60" height="1.40" fill="#ffffff" />
<text x="1235.28" y="396.93" font-size="16.8" fill="#ffffff" stroke="#ffffff" stroke-width="0.25" textLength="57.00" lengthAdjust="spacingAndGlyphs" >6577.05</text>
<rect x="1227.50" y="445.04" width="3.60" height="1.40" fill="#ffffff" />
<text x="1235.28" y="452.35" font-size="16.8" fill="#ffffff" stroke="#ffffff" stroke-width="0.25" textLength="57.00" lengthAdjust="spacingAndGlyphs" >6027.95</text>
<rect x="1227.50" y="500.46" width="3.60" height="1.40" fill="#ffffff" />
<text x="1235.28" y="507.77" font-size="16.8" fill="#ffffff" stroke="#ffffff" stroke-width="0.25" textLength="57.00" lengthAdjust="spacingAndGlyphs" >5495.00</text>
<rect x="1227.50" y="555.88" width="3.60" height="1.40" fill="#ffffff" />
<text x="1235.28" y="563.19" font-size="16.8" fill="#ffffff" stroke="#ffffff" stroke-width="0.25" textLength="57.00" lengthAdjust="spacingAndGlyphs" >4962.05</text>
<rect x="1227.50" y="611.30" width="3.60" height="1.40" fill="#ffffff" />
<text x="1235.28" y="618.61" font-size="16.8" fill="#ffffff" stroke="#ffffff" stroke-width="0.25" textLength="57.00" lengthAdjust="spacingAndGlyphs" >4429.10</text>
<rect x="1227.50" y="666.72" width="3.60" height="1.40" fill="#ffffff" />
<text x="1235.28" y="674.03" font-size="16.8" fill="#ffffff" stroke="#ffffff" stroke-width="0.25" textLength="57.00" lengthAdjust="spacingAndGlyphs" >3896.15</text>
<rect x="1227.50" y="722.14" width="3.60" height="1.40" fill="#ffffff" />
<text x="1235.28" y="729.45" font-size="16.8" fill="#ffffff" stroke="#ffffff" stroke-width="0.25" textLength="57.00" lengthAdjust="spacingAndGlyphs" >3363.20</text>
<rect x="1227.50" y="777.56" width="3.60" height="1.40" fill="#ffffff" />
<text x="1235.28" y="784.87" font-size="16.8" fill="#ffffff" stroke="#ffffff" stroke-width="0.25" textLength="57.00" lengthAdjust="spacingAndGlyphs" >2830.25</text>
<rect x="1229.60" y="38.80" width="70.40" height="18.20" fill="#ffffff" />
<text x="1235.28" y="53.91" font-size="16.8" fill="#000000" stroke="#000000" stroke-width="0.25" textLength="57.00" lengthAdjust="spacingAndGlyphs" >9878.77</text>
<path d="M476.6 16.6 H489 L482.8 23.8 Z" fill="#ffffff"/>
<text y="25.79" font-size="17" fill="#ffffff"><tspan x="497.2" textLength="110.8" lengthAdjust="spacingAndGlyphs">BITCOIN,Daily</tspan><tspan x="618.8" textLength="237" lengthAdjust="spacingAndGlyphs">9615.49 9913.09 9554.74 9878.77</tspan></text>
<text x="482.88" y="336.31" font-size="16.8" fill="#ffffff" stroke="#ffffff" stroke-width="0.25" textLength="146.40" lengthAdjust="spacingAndGlyphs" >#65016576 buy 0.10</text>
<text x="470.38" y="804.61" font-size="16.8" fill="#ffffff" stroke="#ffffff" stroke-width="0.25" textLength="87.30" lengthAdjust="spacingAndGlyphs" >13 Sep 2017</text>
<text x="577.48" y="804.61" font-size="16.8" fill="#ffffff" stroke="#ffffff" stroke-width="0.25" textLength="87.70" lengthAdjust="spacingAndGlyphs" >25 Sep 2017</text>
<text x="684.58" y="804.61" font-size="16.8" fill="#ffffff" stroke="#ffffff" stroke-width="0.25" textLength="78.10" lengthAdjust="spacingAndGlyphs" >5 Oct 2017</text>
<text x="792.08" y="804.61" font-size="16.8" fill="#ffffff" stroke="#ffffff" stroke-width="0.25" textLength="83.80" lengthAdjust="spacingAndGlyphs" >17 Oct 2017</text>
<text x="900.08" y="804.61" font-size="16.8" fill="#ffffff" stroke="#ffffff" stroke-width="0.25" textLength="86.20" lengthAdjust="spacingAndGlyphs" >27 Oct 2017</text>
<text x="1006.68" y="804.61" font-size="16.8" fill="#ffffff" stroke="#ffffff" stroke-width="0.25" textLength="84.00" lengthAdjust="spacingAndGlyphs" >8 Nov 2017</text>
<text x="1114.98" y="804.61" font-size="16.8" fill="#ffffff" stroke="#ffffff" stroke-width="0.25" textLength="90.40" lengthAdjust="spacingAndGlyphs" >20 Nov 2017</text>
<rect x="1291.50" y="818.00" width="8.50" height="630.00" fill="#f3f3f3" />
<rect x="1293.00" y="938.60" width="5.50" height="30.50" fill="#cdcdcd" />
<rect x="1292.00" y="1081.50" width="8.00" height="1.20" fill="#bdbdbd" />
<rect x="1292.00" y="1040.60" width="4.00" height="1.60" fill="#222" />
<rect x="1294.60" y="1047.00" width="1.50" height="23.00" fill="#333" />
<rect x="1292.00" y="1400.60" width="4.00" height="1.60" fill="#222" />
<rect x="23.70" y="818.00" width="1267.60" height="630.00" fill="#f0f0f0" />
<rect x="23.70" y="818.00" width="1267.60" height="43.60" fill="#0063b1" />
<rect x="23.40" y="861.00" width="1.80" height="590.00" fill="#3a85c6" />
<rect x="1289.80" y="861.00" width="1.80" height="590.00" fill="#3a85c6" />
<text y="846.35" font-size="20.4" fill="#ffffff" ><tspan x="30.59" textLength="72.32" lengthAdjust="spacingAndGlyphs">オーダーの</tspan><tspan x="103.89" textLength="40.62" lengthAdjust="spacingAndGlyphs">発注</tspan></text>
<rect x="1090.00" y="839.40" width="17.00" height="1.50" fill="#ffffff" />
<rect x="1166.6" y="833" width="14.6" height="14.4" fill="none" stroke="#4f8fca" stroke-width="1.2"/>
<path d="M1243.2 832.2 L1259 848 M1259 832.2 L1243.2 848" stroke="#ffffff" stroke-width="1.7" fill="none"/>
<rect x="39.40" y="884.00" width="502.00" height="548.00" fill="#ffffff" />
<rect x="39.20" y="884.20" width="502.00" height="2.40" fill="#808080" />
<rect x="39.20" y="884.20" width="2.60" height="548.00" fill="#808080" />
<rect x="46.3" y="891.2" width="419.8" height="535.8" fill="none" stroke="#161616" stroke-width="1.9"/>
<clipPath id="cTick"><rect x="46.5" y="892" width="419" height="534.4"/></clipPath><g clip-path="url(#cTick)">
<line x1="101.70" y1="891.40" x2="101.70" y2="1427.00" stroke="#c8c8c8" stroke-width="1.55" stroke-dasharray="5.2 4.95"/>
<line x1="155.50" y1="891.40" x2="155.50" y2="1427.00" stroke="#c8c8c8" stroke-width="1.55" stroke-dasharray="5.2 4.95"/>
<line x1="209.30" y1="891.40" x2="209.30" y2="1427.00" stroke="#c8c8c8" stroke-width="1.55" stroke-dasharray="5.2 4.95"/>
<line x1="263.10" y1="891.40" x2="263.10" y2="1427.00" stroke="#c8c8c8" stroke-width="1.55" stroke-dasharray="5.2 4.95"/>
<line x1="316.90" y1="891.40" x2="316.90" y2="1427.00" stroke="#c8c8c8" stroke-width="1.55" stroke-dasharray="5.2 4.95"/>
<line x1="370.70" y1="891.40" x2="370.70" y2="1427.00" stroke="#c8c8c8" stroke-width="1.55" stroke-dasharray="5.2 4.95"/>
<line x1="424.50" y1="891.40" x2="424.50" y2="1427.00" stroke="#c8c8c8" stroke-width="1.55" stroke-dasharray="5.2 4.95"/>
<line x1="478.30" y1="891.40" x2="478.30" y2="1427.00" stroke="#c8c8c8" stroke-width="1.55" stroke-dasharray="5.2 4.95"/>
<line x1="46.60" y1="941.40" x2="466.00" y2="941.40" stroke="#c8c8c8" stroke-width="1.55" stroke-dasharray="5.2 4.95"/>
<line x1="46.60" y1="995.15" x2="466.00" y2="995.15" stroke="#c8c8c8" stroke-width="1.55" stroke-dasharray="5.2 4.95"/>
<line x1="46.60" y1="1048.90" x2="466.00" y2="1048.90" stroke="#c8c8c8" stroke-width="1.55" stroke-dasharray="5.2 4.95"/>
<line x1="46.60" y1="1102.65" x2="466.00" y2="1102.65" stroke="#c8c8c8" stroke-width="1.55" stroke-dasharray="5.2 4.95"/>
<line x1="46.60" y1="1156.40" x2="466.00" y2="1156.40" stroke="#c8c8c8" stroke-width="1.55" stroke-dasharray="5.2 4.95"/>
<line x1="46.60" y1="1210.15" x2="466.00" y2="1210.15" stroke="#c8c8c8" stroke-width="1.55" stroke-dasharray="5.2 4.95"/>
<line x1="46.60" y1="1263.90" x2="466.00" y2="1263.90" stroke="#c8c8c8" stroke-width="1.55" stroke-dasharray="5.2 4.95"/>
<line x1="46.60" y1="1317.65" x2="466.00" y2="1317.65" stroke="#c8c8c8" stroke-width="1.55" stroke-dasharray="5.2 4.95"/>
<line x1="46.60" y1="1371.40" x2="466.00" y2="1371.40" stroke="#c8c8c8" stroke-width="1.55" stroke-dasharray="5.2 4.95"/>
<line x1="48.00" y1="1360.00" x2="48.00" y2="1427.00" stroke="#0050ff" stroke-width="1.9" />
<line x1="48.00" y1="1148.70" x2="48.00" y2="1360.00" stroke="#e04a55" stroke-width="1.7" />
<line x1="49.90" y1="1148.70" x2="49.90" y2="1207.70" stroke="#2a6aff" stroke-width="2" />
<line x1="49.60" y1="942.00" x2="49.60" y2="1148.70" stroke="#ff6a6a" stroke-width="1.7" />
<polyline points="48.9,941.9 50.8,939.6 52.4,943.1 54.2,924.6 56.5,921.2 58.8,922.3 62.3,921.2 66.9,917.7 69.2,914.2 71.5,916.5 73.8,914.7 76.2,937.3 77.3,930.4 80.8,931.5 84.2,929.2 87.7,936.2 91.2,933.8 94.6,937.3 98.1,935.0 101.1,937.8 103.4,922.3 106.2,922.3 110.8,922.3 114.2,924.6 116.5,931.5 118.8,926.9 121.8,939.6 123.5,933.8 125.8,938.5 129.2,933.8 132.7,928.1 135.0,920.0 138.5,917.7 141.9,920.0 144.2,923.5 147.7,920.0 151.2,922.3 154.6,920.0 158.1,921.2 162.7,922.3 168.5,921.2 170.3,901.5 173.1,902.7 175.4,899.2 178.8,896.9 181.2,892.3 184.6,894.6 188.1,892.3 191.5,895.8 195.0,892.3 198.5,893.5 201.2,899.2 204.2,895.8 207.7,895.8 210.0,903.8 213.5,902.7 215.8,910.8 219.2,907.3 222.7,908.5 226.2,906.2 229.6,905.0 233.1,906.2 237.7,905.7 245.8,905.7 249.2,908.5 252.7,911.2 256.2,910.8 258.5,909.6 466.6,909.6" fill="none" stroke="#ff5252" stroke-width="1.5" stroke-linejoin="round"/>
<polyline points="48.9,990.4 51.9,993.8 54.2,989.2 57.7,988.1 64.6,988.1 65.8,990.4 68.1,983.5 70.4,985.8 72.7,983.5 75.0,988.1 77.3,982.3 80.8,981.2 84.2,977.7 87.7,983.5 91.2,984.6 93.5,982.3 96.9,986.9 99.2,985.8 101.1,988.5 103.4,973.1 107.3,973.1 111.9,973.1 114.2,977.7 117.2,974.2 120.0,980.0 121.8,988.1 123.5,981.2 125.8,988.1 128.8,986.9 131.5,978.8 135.0,970.8 138.5,968.5 141.9,969.6 144.2,973.1 148.2,968.5 151.8,973.1 155.8,968.5 160.4,971.5 168.5,971.5 170.8,961.5 174.2,950.0 178.8,950.0 181.2,954.6 184.6,950.0 186.9,954.6 189.2,950.0 192.7,950.0 196.2,955.8 199.6,951.2 201.9,952.3 205.4,958.1 208.2,963.8 211.2,958.1 214.6,962.7 216.9,961.5 219.2,955.8 222.7,958.1 226.2,957.6 229.6,954.6 237.7,954.6 245.8,956.2 251.5,959.9 466.6,959.9" fill="none" stroke="#0a5cff" stroke-width="1.7" stroke-linejoin="round"/>
</g>
<text x="49.68" y="909.21" font-size="16.8" fill="#000" stroke="#000" stroke-width="0.25" textLength="70.50" lengthAdjust="spacingAndGlyphs" >BITCOIN</text>
<rect x="466.50" y="940.70" width="3.00" height="1.40" fill="#000" />
<text x="474.68" y="947.31" font-size="16.8" fill="#000" stroke="#000" stroke-width="0.25" textLength="56.20" lengthAdjust="spacingAndGlyphs" >9887.60</text>
<rect x="466.50" y="994.40" width="3.00" height="1.40" fill="#000" />
<text x="474.68" y="1001.01" font-size="16.8" fill="#000" stroke="#000" stroke-width="0.25" textLength="56.20" lengthAdjust="spacingAndGlyphs" >9859.66</text>
<rect x="466.50" y="1048.10" width="3.00" height="1.40" fill="#000" />
<text x="474.68" y="1054.71" font-size="16.8" fill="#000" stroke="#000" stroke-width="0.25" textLength="56.20" lengthAdjust="spacingAndGlyphs" >9831.72</text>
<rect x="466.50" y="1101.90" width="3.00" height="1.40" fill="#000" />
<text x="474.68" y="1108.51" font-size="16.8" fill="#000" stroke="#000" stroke-width="0.25" textLength="56.20" lengthAdjust="spacingAndGlyphs" >9803.78</text>
<rect x="466.50" y="1155.70" width="3.00" height="1.40" fill="#000" />
<text x="474.68" y="1162.31" font-size="16.8" fill="#000" stroke="#000" stroke-width="0.25" textLength="56.20" lengthAdjust="spacingAndGlyphs" >9775.84</text>
<rect x="466.50" y="1209.50" width="3.00" height="1.40" fill="#000" />
<text x="474.68" y="1216.11" font-size="16.8" fill="#000" stroke="#000" stroke-width="0.25" textLength="56.20" lengthAdjust="spacingAndGlyphs" >9747.90</text>
<rect x="466.50" y="1263.10" width="3.00" height="1.40" fill="#000" />
<text x="474.68" y="1269.71" font-size="16.8" fill="#000" stroke="#000" stroke-width="0.25" textLength="56.20" lengthAdjust="spacingAndGlyphs" >9719.96</text>
<rect x="466.50" y="1316.90" width="3.00" height="1.40" fill="#000" />
<text x="474.68" y="1323.51" font-size="16.8" fill="#000" stroke="#000" stroke-width="0.25" textLength="56.20" lengthAdjust="spacingAndGlyphs" >9692.02</text>
<rect x="466.50" y="1370.70" width="3.00" height="1.40" fill="#000" />
<text x="474.68" y="1377.31" font-size="16.8" fill="#000" stroke="#000" stroke-width="0.25" textLength="56.20" lengthAdjust="spacingAndGlyphs" >9664.08</text>
<text x="474.68" y="1426.31" font-size="16.8" fill="#000" stroke="#000" stroke-width="0.25" textLength="56.20" lengthAdjust="spacingAndGlyphs" >9636.14</text>
<rect x="469.00" y="900.40" width="68.60" height="18.00" fill="#ff6262" />
<text x="474.68" y="915.41" font-size="16.8" fill="#ffffff" stroke="#ffffff" stroke-width="0.25" textLength="56.20" lengthAdjust="spacingAndGlyphs" >9904.29</text>
<rect x="469.00" y="951.00" width="68.60" height="18.00" fill="#0a5cff" />
<text x="474.68" y="966.01" font-size="16.8" fill="#ffffff" stroke="#ffffff" stroke-width="0.25" textLength="56.20" lengthAdjust="spacingAndGlyphs" >9878.77</text>
<rect x="719.8" y="885.0" width="540.1" height="32.4" fill="#e1e1e1" stroke="#adadad" stroke-width="1.55"/>
<path d="M1238.3 898.1 L1245.5 905.3 L1252.7 898.1" fill="none" stroke="#3c3c3c" stroke-width="1.5"/>
<rect x="724.2" y="889.2" width="502.8" height="24.8" fill="none" stroke="#1a1a1a" stroke-width="1.5" stroke-dasharray="1.72 1.65"/>
<text x="724.50" y="909.02" font-size="18.2" fill="#000" stroke="#000" stroke-width="0.25" textLength="134.63" lengthAdjust="spacingAndGlyphs" >BITCOIN, Bitcoin</text>
<rect x="719.8" y="928.1" width="174.4" height="33.0" fill="#ffffff" stroke="#6e6e6e" stroke-width="1.55"/>
<path d="M872.6 941.5 L879.8 948.7 L887.0 941.5" fill="none" stroke="#3c3c3c" stroke-width="1.5"/>
<text x="727.28" y="950.86" font-size="18.6" fill="#000" stroke="#000" stroke-width="0.25" textLength="38.47" lengthAdjust="spacingAndGlyphs" >0.01</text>
<rect x="719.8" y="971.6" width="174.4" height="31.5" fill="#ffffff" stroke="#8e8e8e" stroke-width="1.55"/>
<rect x="866.2" y="973.6" width="25.6" height="27.5" fill="#f0f0f0" stroke="#b2b2b2" stroke-width="1.5"/>
<line x1="866.20" y1="987.35" x2="891.80" y2="987.35" stroke="#b2b2b2" stroke-width="1.7" />
<path d="M874.4 983.1 L879.0 978.0 L883.6 983.1 Z" fill="#000"/>
<path d="M874.4 991.8 L879.0 997.0 L883.6 991.8 Z" fill="#000"/>
<text x="819.18" y="994.36" font-size="18.6" fill="#000" stroke="#000" stroke-width="0.25" textLength="38.17" lengthAdjust="spacingAndGlyphs" >0.00</text>
<rect x="1084.3" y="971.6" width="174.4" height="31.5" fill="#ffffff" stroke="#8e8e8e" stroke-width="1.55"/>
<rect x="1230.7" y="973.6" width="25.6" height="27.5" fill="#f0f0f0" stroke="#b2b2b2" stroke-width="1.5"/>
<line x1="1230.70" y1="987.35" x2="1256.30" y2="987.35" stroke="#b2b2b2" stroke-width="1.7" />
<path d="M1238.9 983.1 L1243.5 978.0 L1248.1 983.1 Z" fill="#000"/>
<path d="M1238.9 991.8 L1243.5 997.0 L1248.1 991.8 Z" fill="#000"/>
<text x="1183.78" y="994.36" font-size="18.6" fill="#000" stroke="#000" stroke-width="0.25" textLength="37.97" lengthAdjust="spacingAndGlyphs" >0.00</text>
<rect x="719.8" y="1015.6" width="540.1" height="31.2" fill="#ffffff" stroke="#7a7a7a" stroke-width="1.55"/>
<rect x="719.8" y="1059.6" width="540.1" height="32.4" fill="#e1e1e1" stroke="#adadad" stroke-width="1.55"/>
<path d="M1238.3 1072.7 L1245.5 1079.9 L1252.7 1072.7" fill="none" stroke="#3c3c3c" stroke-width="1.5"/>
<text x="724.60" y="1083.00" font-size="20" fill="#000"  textLength="80.00" lengthAdjust="spacingAndGlyphs" >成行注文</text>
<text y="909.40" font-size="20" fill="#000" ><tspan x="620.40" textLength="38.90" lengthAdjust="spacingAndGlyphs">通貨</tspan><tspan x="659.40" textLength="34.90" lengthAdjust="spacingAndGlyphs">ペア</tspan><tspan x="697.90" textLength="4.70" lengthAdjust="spacingAndGlyphs">:</tspan></text>
<text x="651.90" y="951.90" font-size="20" fill="#000"  textLength="51.70" lengthAdjust="spacingAndGlyphs" >数量:</text>
<text y="994.90" font-size="20" fill="#000" ><tspan x="565.20" textLength="100.80" lengthAdjust="spacingAndGlyphs">決済逆指値</tspan><tspan x="665.80" textLength="38.40" lengthAdjust="spacingAndGlyphs">(S/L)</tspan></text>
<text x="636.40" y="1039.40" font-size="20" fill="#000"  textLength="67.20" lengthAdjust="spacingAndGlyphs" >コメント:</text>
<text x="612.40" y="1083.00" font-size="20" fill="#000"  textLength="91.20" lengthAdjust="spacingAndGlyphs" >注文種別:</text>
<text y="994.90" font-size="20" fill="#000" ><tspan x="950.10" textLength="80.10" lengthAdjust="spacingAndGlyphs">決済指値</tspan><tspan x="1030.40" textLength="40.40" lengthAdjust="spacingAndGlyphs">(T/P)</tspan></text>
<rect x="554.6" y="1117.8" width="717.6" height="313.6" fill="none" stroke="#dcdcdc" stroke-width="1.3"/>
<rect x="564.00" y="1110.00" width="90.00" height="16.00" fill="#f0f0f0" />
<text x="568.40" y="1126.00" font-size="20" fill="#000"  textLength="80.90" lengthAdjust="spacingAndGlyphs" >成行注文</text>
<text x="734.13" y="1203.89" font-size="43" fill="#000"  textLength="356.88" lengthAdjust="spacingAndGlyphs" >9878.77 / 9904.29</text>
<rect x="581.8" y="1245.8" width="311.2" height="33.6" fill="#e4e4e4" stroke="#b0b0b0" stroke-width="1.7"/>
<rect x="584.9" y="1248.9" width="304.8" height="27.4" rx="2.5" ry="2.5" fill="#ff8080" stroke="#f26f70" stroke-width="1.1"/>
<text x="698.40" y="1270.00" font-size="20" fill="#000"  textLength="76.20" lengthAdjust="spacingAndGlyphs" >成行売り</text>
<rect x="934.4" y="1245.8" width="311.2" height="33.6" fill="#e4e4e4" stroke="#b0b0b0" stroke-width="1.7"/>
<rect x="937.7" y="1248.9" width="304.8" height="27.4" rx="2.5" ry="2.5" fill="#a0c0ff" stroke="#8fb0f2" stroke-width="1.1"/>
<text x="1050.00" y="1270.00" font-size="20" fill="#000"  textLength="78.60" lengthAdjust="spacingAndGlyphs" >成行買い</text>
<rect x="581.6" y="1296.1" width="663.8" height="33.6" fill="#cccccc" stroke="#c0c0c0" stroke-width="1.2"/>
<text y="1372.00" font-size="20" fill="#000" ><tspan x="579.90" textLength="70.70" lengthAdjust="spacingAndGlyphs">ご注意！</tspan><tspan> </tspan><tspan x="660.90" textLength="107.70" lengthAdjust="spacingAndGlyphs">成行注文は、</tspan><tspan x="772.10" textLength="139.30" lengthAdjust="spacingAndGlyphs">市場状況によって</tspan><tspan x="911.40" textLength="96.90" lengthAdjust="spacingAndGlyphs">約定価格が</tspan><tspan x="1008.40" textLength="125.20" lengthAdjust="spacingAndGlyphs">決まりますので、</tspan><tspan x="1136.40" textLength="65.70" lengthAdjust="spacingAndGlyphs">必ずしも</tspan><tspan x="1203.40" textLength="40.50" lengthAdjust="spacingAndGlyphs">提示</tspan></text>
<text y="1392.60" font-size="20" fill="#000" ><tspan x="787.80" textLength="57.40" lengthAdjust="spacingAndGlyphs">価格で</tspan><tspan x="845.30" textLength="101.10" lengthAdjust="spacingAndGlyphs">約定するとは</tspan><tspan x="946.40" textLength="90.20" lengthAdjust="spacingAndGlyphs">限りません!</tspan></text>
</svg>
</body></html>
